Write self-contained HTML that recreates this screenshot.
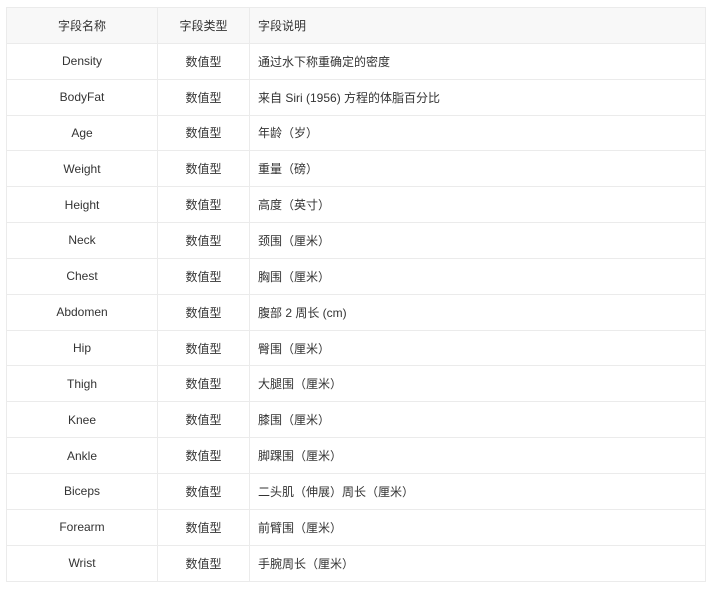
<!DOCTYPE html>
<html><head><meta charset="utf-8"><style>
body{margin:0;background:#fff;}
table{position:absolute;left:6px;top:7px;width:700px;border-collapse:collapse;font-family:"Liberation Sans","Noto Sans CJK SC",sans-serif;font-size:12px;color:#333;}
td,th{border:1px solid #ebebeb;height:34.85px;padding:0;font-weight:normal;}
th{background:#f8f8f8;}
td:nth-child(1),td:nth-child(2),th:nth-child(1),th:nth-child(2){text-align:center;}
td:nth-child(3),th:nth-child(3){text-align:left;padding-left:8px;}
</style></head><body>
<table>
<colgroup><col style="width:151px"><col style="width:92px"><col></colgroup>
<tr><th>字段名称</th><th>字段类型</th><th>字段说明</th></tr>
<tr><td>Density</td><td>数值型</td><td>通过水下称重确定的密度</td></tr>
<tr><td>BodyFat</td><td>数值型</td><td>来自 Siri (1956) 方程的体脂百分比</td></tr>
<tr><td>Age</td><td>数值型</td><td>年龄（岁）</td></tr>
<tr><td>Weight</td><td>数值型</td><td>重量（磅）</td></tr>
<tr><td>Height</td><td>数值型</td><td>高度（英寸）</td></tr>
<tr><td>Neck</td><td>数值型</td><td>颈围（厘米）</td></tr>
<tr><td>Chest</td><td>数值型</td><td>胸围（厘米）</td></tr>
<tr><td>Abdomen</td><td>数值型</td><td>腹部 2 周长 (cm)</td></tr>
<tr><td>Hip</td><td>数值型</td><td>臀围（厘米）</td></tr>
<tr><td>Thigh</td><td>数值型</td><td>大腿围（厘米）</td></tr>
<tr><td>Knee</td><td>数值型</td><td>膝围（厘米）</td></tr>
<tr><td>Ankle</td><td>数值型</td><td>脚踝围（厘米）</td></tr>
<tr><td>Biceps</td><td>数值型</td><td>二头肌（伸展）周长（厘米）</td></tr>
<tr><td>Forearm</td><td>数值型</td><td>前臂围（厘米）</td></tr>
<tr><td>Wrist</td><td>数值型</td><td>手腕周长（厘米）</td></tr>
</table>
</body></html>
